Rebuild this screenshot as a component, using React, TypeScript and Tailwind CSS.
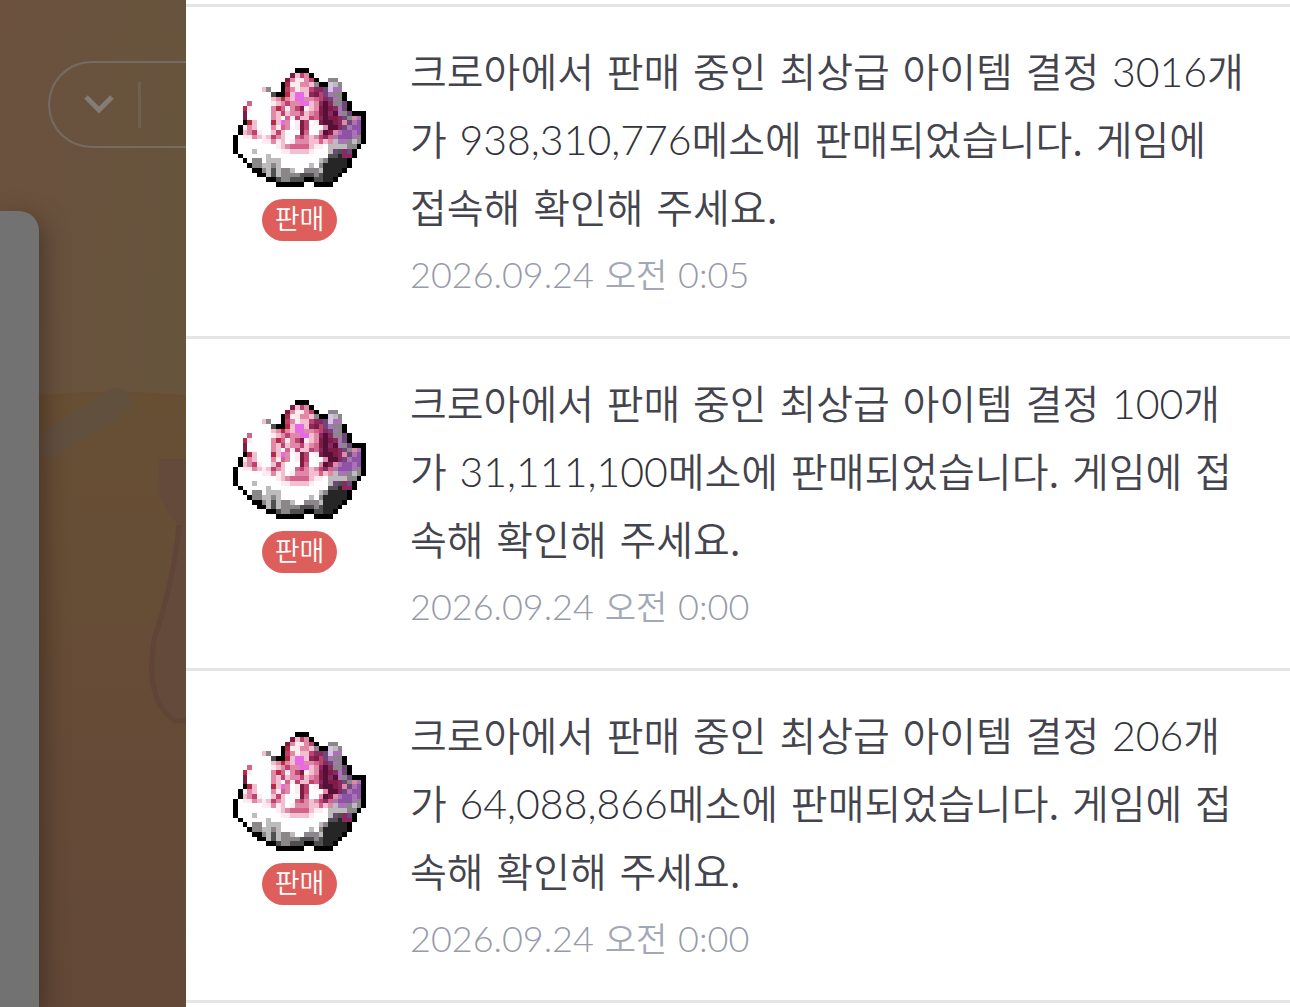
import React from 'react';

type Sale = { id: number; lines: string[]; time: string };

const sales: Sale[] = [
  {
    id: 1,
    lines: [
      '크로아에서 판매 중인 최상급 아이템 결정 3016개',
      '가 938,310,776메소에 판매되었습니다. 게임에',
      '접속해 확인해 주세요.',
    ],
    time: '2026.09.24 오전 0:05',
  },
  {
    id: 2,
    lines: [
      '크로아에서 판매 중인 최상급 아이템 결정 100개',
      '가 31,111,100메소에 판매되었습니다. 게임에 접',
      '속해 확인해 주세요.',
    ],
    time: '2026.09.24 오전 0:00',
  },
  {
    id: 3,
    lines: [
      '크로아에서 판매 중인 최상급 아이템 결정 206개',
      '가 64,088,866메소에 판매되었습니다. 게임에 접',
      '속해 확인해 주세요.',
    ],
    time: '2026.09.24 오전 0:00',
  },
];

const palette: Record<string, string> = {
  K: '#000000',
  W: '#ffffff',
  w: '#fdecef',
  l: '#f3bfd0',
  p: '#e088a6',
  P: '#d2648c',
  h: '#bd4270',
  r: '#b52c42',
  R: '#7e1c44',
  m: '#560f38',
  M: '#8a2860',
  v: '#e66ae6',
  o: '#a874b4',
  u: '#8f52a6',
  U: '#6e4878',
  g: '#8a868a',
  s: '#bcbcbc',
  d: '#505050',
  D: '#262626',
  t: '#d6c4e4',
};

// One character per pixel of the crystal sprite, 28 across and 25 down.
const crystal = [
  '.............KKK............',
  '............RlhpK...........',
  '...........RpwwphK..gg......',
  '..........KrwwpplgKKtsg.....',
  '......lg..KhpwllhMMUtoo.....',
  '........dKKrlvvlMRhUoggK....',
  '........lprplvvppPhMUogK....',
  '...P....wlphppvvlpMmMggUK...',
  '..rw....prPwphRwlpRmRMoUK...',
  '..RW....plhlpphlpPRmMmogUKKK',
  '..RWWW..plWPwhllhPMmRRMUgpoK',
  '..KrlWWWrlvpWwRhWwRmmRMpUouK',
  '.KwplWWWpwPpWwRhWWWpmmMUouuK',
  '.KlphwWWlhlWWWRPWWpmRpouuouK',
  'KWwwplwlhplWWPhplphMPouuuogK',
  'KWWWWWwwpwlWwpppllPlpsoogsgK',
  'KWWWWWWWWwlpPPPPlwwWssssggK.',
  'KWWWsWWWWWwwllllwWWWsUdMUK..',
  '.KWWWWWsWWWWWWWWWWWWddDMMK..',
  '..KWggWsssWWWWWWWWsgDDDDK...',
  '...KggssgsWWWWWWsWgDDDDDK...',
  '....KKgsdsggsWWgggsDDDDK....',
  '.....KKsdsggggdddgdDDDK.....',
  '.......KKdggdddKKddDDK......',
  '.........KKKKKK..KKKK.......',
];

function CrystalIcon() {
  return (
    <svg
      className="h-[119px] w-[133px]"
      viewBox="0 0 28 25"
      preserveAspectRatio="none"
      shapeRendering="crispEdges"
      role="img"
      aria-label="최상급 아이템 결정"
    >
      {crystal.flatMap((row, y) =>
        [...row].map((c, x) =>
          c === '.' ? null : <rect key={`${x}-${y}`} x={x} y={y} width="1" height="1" fill={palette[c]} />,
        ),
      )}
    </svg>
  );
}

// Latin digits and word spaces come from their own faces; Hangul uses the page font.
function Mixed({ text, digits }: { text: string; digits: string }) {
  return (
    <>
      {text.split(/(\d[\d.,:]*| )/).map((part, i) => {
        if (part === ' ') {
          return (
            <span key={i} className="font-['DejaVu_Sans'] leading-none">
              {part}
            </span>
          );
        }
        return /^\d/.test(part) ? (
          <span key={i} className={digits}>
            {part}
          </span>
        ) : (
          part
        );
      })}
    </>
  );
}

function SaleRow({ sale }: { sale: Sale }) {
  return (
    <li className="flex border-b-[3px] border-[#e5e5e5] pb-7 pl-[47px]">
      <div className="flex w-[133px] shrink-0 flex-col items-center gap-3 pt-[61px]">
        <CrystalIcon />
        <span className="flex h-[42px] w-[75px] items-center justify-center rounded-full bg-[#de5e5b] pb-1 text-[27px] text-white">
          판매
        </span>
      </div>
      <div className="ml-[44px] min-w-0 flex-1 pt-[29px]">
        <p className="text-[40px] leading-[68px] whitespace-nowrap text-[#43444d]">
          {sale.lines.map((line) => (
            <span key={line} className="block">
              <Mixed text={line} digits="font-['Lato'] font-light text-[41px] leading-none text-[#32333b]" />
            </span>
          ))}
        </p>
        <time className="block text-[34px] leading-[68px] text-[#a4a8b6]">
          <Mixed text={sale.time} digits="font-['Lato'] font-light text-[36px] leading-none text-[#969aaa]" />
        </time>
      </div>
    </li>
  );
}

function Backdrop() {
  return (
    <aside className="relative flex w-[186px] shrink-0 flex-col overflow-hidden bg-linear-to-b from-[#6a533e] via-[#675036] to-[#634838]">
      <svg className="absolute inset-0 h-full w-full" viewBox="0 0 186 1007" preserveAspectRatio="none" aria-hidden="true">
        <defs>
          <linearGradient id="dusk" x1="0" y1="0" x2="0" y2="1">
            <stop offset="0" stopColor="#674f34" />
            <stop offset="0.5" stopColor="#664c37" />
            <stop offset="1" stopColor="#634838" />
          </linearGradient>
          <linearGradient id="sky" x1="0" y1="0" x2="1" y2="0.2">
            <stop offset="0" stopColor="#6b513e" />
            <stop offset="1" stopColor="#67543d" />
          </linearGradient>
        </defs>
        <rect width="186" height="400" fill="url(#sky)" />
        <path d="M0 400Q100 388 186 397V1007H0Z" fill="url(#dusk)" />
        <path d="M0 401Q100 388 186 397" fill="none" stroke="#694c34" strokeWidth="3" />
        <path d="M52 443L117 402" stroke="#62503f" strokeWidth="28" strokeLinecap="round" />
        <path d="M186 459H159V492Q165 512 179 525Q174 580 154 640Q144 700 175 721H186Z" fill="#644a3a" />
        <path d="M179 525Q174 580 154 640Q144 700 175 721H186" fill="none" stroke="#604437" strokeWidth="5" />
      </svg>
      <button
        type="button"
        aria-label="서버 선택"
        className="relative mt-[61px] ml-12 flex h-[87px] items-center rounded-l-full border-2 border-r-0 border-[#746b61]"
      >
        <svg className="ml-[34px] h-5 w-[30px]" viewBox="0 0 30 20" fill="none" aria-hidden="true">
          <path d="M2 2L15 15L28 2" stroke="#827d78" strokeWidth="5" />
        </svg>
        <span className="ml-6 h-[46px] w-[3px] bg-[#70604f]" />
      </button>
      <div className="relative mt-[63px] w-[39px] flex-1 rounded-tr-[20px] bg-[#727272] shadow-[4px_8px_24px_rgba(40,24,20,0.5)]" />
    </aside>
  );
}

export default function App() {
  return (
    <div className="flex min-h-screen overflow-hidden bg-white font-['Noto_Sans_CJK_KR',sans-serif] font-[350]">
      <Backdrop />
      <main className="min-w-0 flex-1 bg-white">
        <ul className="mt-1 border-t-[3px] border-[#e5e5e5]">
          {sales.map((sale) => (
            <SaleRow key={sale.id} sale={sale} />
          ))}
        </ul>
      </main>
    </div>
  );
}
